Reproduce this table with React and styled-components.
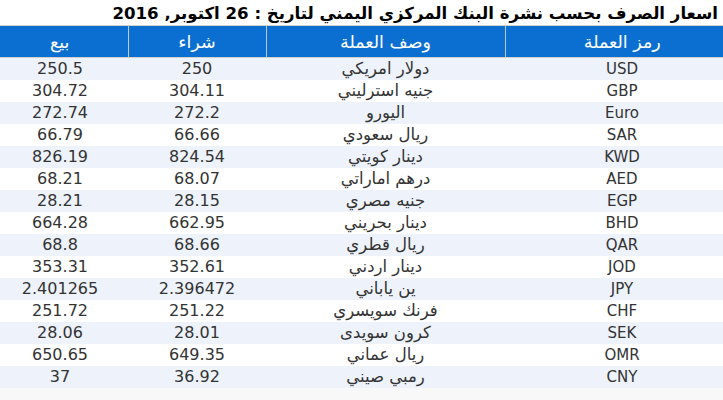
import React from "react";
import styled, { createGlobalStyle } from "styled-components";

const GlobalStyle = createGlobalStyle`
  html, body {
    margin: 0;
    padding: 0;
    background: #f8f8f8;
    font-family: "DejaVu Sans", Tahoma, sans-serif;
  }
`;

const Wrapper = styled.div`
  width: 723px;
  height: 400px;
  overflow: hidden;
  direction: rtl;
  background: #f8f8f8;
`;

const Title = styled.h2`
  margin: 0;
  height: 25px;
  padding-right: 5px;
  background: #fff;
  font-size: 16.6px;
  font-weight: bold;
  line-height: 27px;
  color: #000;
  white-space: nowrap;
`;

// the grid is a bit wider than the window and gets clipped on both sides
const Table = styled.table`
  width: 747px;
  margin-right: -16px;
  border-collapse: collapse;
  table-layout: fixed;
`;

const HeadCell = styled.th`
  height: 31px;
  padding: 0;
  background: #0b6fd2;
  color: #fff;
  font-weight: normal;
  font-size: 17.5px;
  text-align: center;
  border-top: 1px solid #d0d0d0;
  border-bottom: 1px solid #d0d0d0;
  border-left: 1px solid #c0c8d0;
  &:last-child {
    border-left: none;
  }
`;

const Row = styled.tr`
  background: ${props => (props.$odd ? "#edf2fb" : "#ffffff")};
`;

const sizes = ["15px", "16.5px", "16px", "16px"];

const Cell = styled.td`
  height: 22px;
  padding: 0;
  text-align: center;
  color: #333;
  font-size: ${props => sizes[props.$col]};
  line-height: 22px;
  white-space: nowrap;
`;

const columns = [
  { label: "رمز العملة", width: 234 },
  { label: "وصف العملة", width: 239 },
  { label: "شراء", width: 138 },
  { label: "بيع", width: 136 },
];

const rates = [
  ["USD", "دولار امريكي", "250", "250.5"],
  ["GBP", "جنيه استرليني", "304.11", "304.72"],
  ["Euro", "اليورو", "272.2", "272.74"],
  ["SAR", "ريال سعودي", "66.66", "66.79"],
  ["KWD", "دينار كويتي", "824.54", "826.19"],
  ["AED", "درهم اماراتي", "68.07", "68.21"],
  ["EGP", "جنيه مصري", "28.15", "28.21"],
  ["BHD", "دينار بحريني", "662.95", "664.28"],
  ["QAR", "ريال قطري", "68.66", "68.8"],
  ["JOD", "دينار اردني", "352.61", "353.31"],
  ["JPY", "ين ياباني", "2.396472", "2.401265"],
  ["CHF", "فرنك سويسري", "251.22", "251.72"],
  ["SEK", "كرون سويدى", "28.01", "28.06"],
  ["OMR", "ريال عماني", "649.35", "650.65"],
  ["CNY", "رمبي صيني", "36.92", "37"],
];

const App = () => (
  <Wrapper>
    <GlobalStyle />
    <Title>اسعار الصرف بحسب نشرة البنك المركزي اليمني لتاريخ : 26 اكتوبر, 2016</Title>
    <Table>
      <colgroup>
        {columns.map(c => (
          <col key={c.label} style={{ width: c.width }} />
        ))}
      </colgroup>
      <thead>
        <tr>
          {columns.map(c => (
            <HeadCell key={c.label}>{c.label}</HeadCell>
          ))}
        </tr>
      </thead>
      <tbody>
        {rates.map((r, i) => (
          <Row key={r[0]} $odd={i % 2 === 0}>
            {r.map((v, j) => (
              <Cell key={j} $col={j}>{v}</Cell>
            ))}
          </Row>
        ))}
      </tbody>
    </Table>
  </Wrapper>
);

export default App;
